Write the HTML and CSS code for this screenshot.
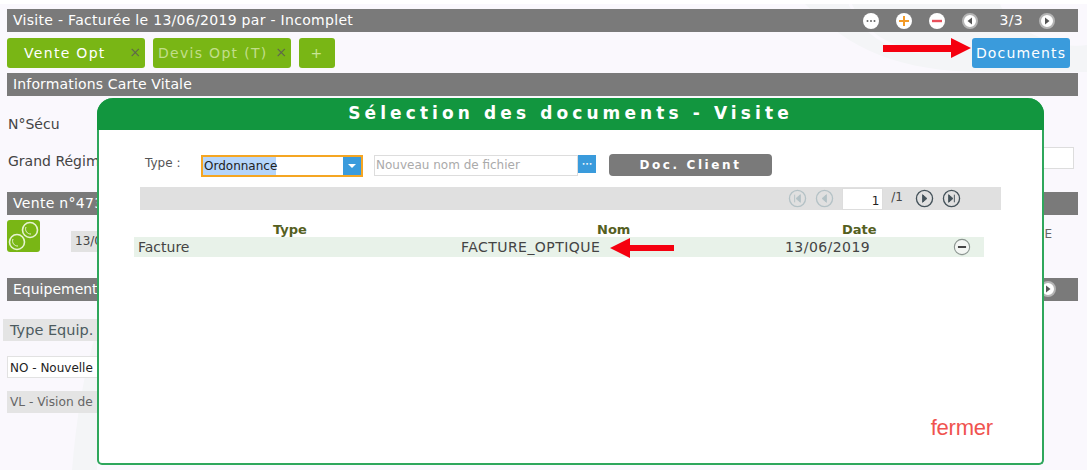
FILE: index.html
```html
<!DOCTYPE html>
<html lang="fr">
<head>
<meta charset="utf-8">
<title>Sélection des documents</title>
<link rel="stylesheet" href="styles.css">
</head>
<body>
<svg class="swoosh" width="1089" height="470" viewBox="0 0 1089 470" aria-hidden="true">
  <path d="M805 4 C850 50 900 72 985 72 L1087 72 L1087 45 C1060 50 1010 30 1000 4 Z" fill="#e6f2e8"/>
  <path d="M850 4 C862 30 885 48 920 52" fill="none" stroke="#ffffff" stroke-width="3"/>
  <path d="M72 470 C76 420 84 370 97 330 L97 470 Z" fill="#e6f2e8"/>
</svg>
<div class="page">
  <div class="bar bar-top">
    <span>Visite - Facturée le 13/06/2019 par - Incomplet</span>
    <div class="bar-tools">
      <svg class="ti" viewBox="0 0 18 18"><circle cx="9" cy="9" r="8" fill="#fff"/><circle cx="5.5" cy="9" r="1" fill="#666"/><circle cx="9" cy="9" r="1" fill="#666"/><circle cx="12.5" cy="9" r="1" fill="#666"/></svg>
      <svg class="ti" viewBox="0 0 18 18"><circle cx="9" cy="9" r="8" fill="#fff"/><path d="M9 4v10M4 9h10" stroke="#f39a26" stroke-width="2"/></svg>
      <svg class="ti" viewBox="0 0 18 18"><circle cx="9" cy="9" r="8" fill="#fff"/><path d="M4 9h10" stroke="#e8505b" stroke-width="2.4"/></svg>
      <svg class="ti" viewBox="0 0 18 18"><circle cx="9" cy="9" r="7" fill="#fff" stroke="#b5b5b5" stroke-width="2"/><path d="M11 5.500v7L6.500 9z" fill="#555"/></svg>
      <span class="count">3/3</span>
      <svg class="ti" viewBox="0 0 18 18"><circle cx="9" cy="9" r="7" fill="#fff" stroke="#b5b5b5" stroke-width="2"/><path d="M7 5.500v7l4.500-3.500z" fill="#555"/></svg>
    </div>
  </div>
  <div class="tabs">
    <div class="tab tab-active">Vente Opt<span class="x">×</span></div>
    <div class="tab tab-muted">Devis Opt (T)<span class="x">×</span></div>
    <div class="tab tab-add">+</div>
    <div class="tab-doc">Documents</div>
  </div>
  <div class="bar bar-info">Informations Carte Vitale</div>
  <div class="field f-secu">N°Sécu</div>
  <div class="field-row">
    <span class="field">Grand Régime</span>
    <span class="right-input"></span>
  </div>
  <div class="bar bar-vente">Vente n°473</div>
  <div class="vente-row">
    <div class="glasses">
      <svg width="33" height="32" viewBox="0 0 33 32"><g fill="none" stroke="#e6f3d2"><circle cx="10" cy="22" r="7.500" stroke-width="1.600"/><circle cx="23" cy="10" r="7.500" stroke-width="1.600"/><path d="M6 19a5 5 0 0 0 5 7M19 7a5 5 0 0 0 5 7" stroke-width="1"/></g></svg>
    </div>
    <div class="date-box">13/06/2019</div>
    <span class="letter-e">E</span>
  </div>
  <div class="bar bar-equip">Equipement
    <svg class="ti equip-next" viewBox="0 0 18 18"><circle cx="9" cy="9" r="7" fill="#fff" stroke="#b5b5b5" stroke-width="2"/><path d="M7 5.500v7l4.500-3.500z" fill="#555"/></svg>
  </div>
  <div class="equip-head">Type Equip.</div>
  <div class="equip-sel">NO - Nouvelle</div>
  <div class="equip-vl">VL - Vision de</div>
</div>

<div class="modal">
  <div class="modal-title">Sélection des documents - Visite</div>
  <div class="modal-body">
    <div class="form-row">
      <span class="type-label">Type :</span>
      <div class="select">
        <span class="select-text">Ordonnance</span>
        <span class="select-btn"><svg width="10" height="6" viewBox="0 0 10 6"><path d="M1 1h8L5 5z" fill="#fff"/></svg></span>
      </div>
      <div class="filename">Nouveau nom de fichier</div>
      <div class="dots">•••</div>
      <div class="doc-client">Doc. Client</div>
    </div>
    <div class="pager">
      <svg class="pi dim" viewBox="0 0 20 20"><circle cx="10" cy="10" r="8.500"/><path d="M7 6v8M13 6v8L8.500 10z"/></svg>
      <svg class="pi dim" viewBox="0 0 20 20"><circle cx="10" cy="10" r="8.500"/><path d="M12 6v8L7.500 10z"/></svg>
      <div class="page-num">1</div>
      <span class="page-total">/1</span>
      <svg class="pi" viewBox="0 0 20 20"><circle cx="10" cy="10" r="8.500"/><path d="M8 6v8l4.500-4z"/></svg>
      <svg class="pi" viewBox="0 0 20 20"><circle cx="10" cy="10" r="8.500"/><path d="M13 6v8M7 6v8l4.500-4z"/></svg>
    </div>
    <div class="thead">
      <span class="col-type">Type</span>
      <span class="col-nom">Nom</span>
      <span class="col-date">Date</span>
    </div>
    <div class="trow">
      <span class="cell-type">Facture</span>
      <span class="cell-nom">FACTURE_OPTIQUE</span>
      <span class="cell-date">13/06/2019</span>
      <svg class="minus" viewBox="0 0 20 20"><circle cx="10" cy="10" r="8.500" fill="#f3f6f3" stroke="#8b9590" stroke-width="1.200"/><path d="M5.500 10h9" stroke="#333" stroke-width="2"/></svg>
    </div>
    <div class="close">fermer</div>
  </div>
</div>

<svg class="arrow arrow-doc" width="88" height="20" viewBox="0 0 88 20" aria-hidden="true"><path d="M0 7h68V0l20 10-20 10v-6H0z" fill="#f5000f"/></svg>
<svg class="arrow arrow-nom" width="64" height="20" viewBox="0 0 64 20" aria-hidden="true"><path d="M64 7H20V0L0 10l20 10v-7h44z" fill="#f5000f"/></svg>
</body>
</html>
```
FILE: styles.css
```css
html, body {
  margin: 0;
  padding: 0;
}
body {
  width: 1089px;
  height: 470px;
  position: relative;
  overflow: hidden;
  background: #ffffff;
  font-family: "DejaVu Sans", Verdana, sans-serif;
  font-size: 12.500px;
  color: #444;
}
.swoosh {
  position: absolute;
  left: 0;
  top: 0;
}
.page {
  position: relative;
  margin: 4px 2px 0 0;
  height: 466px;
  padding: 5px 9px 0 7px;
  box-sizing: border-box;
  background: rgba(248, 246, 252, 0.75);
}
.bar {
  background: #7a7a7a;
  color: #fff;
  height: 23px;
  line-height: 23px;
  padding-left: 6px;
  font-size: 14px;
  letter-spacing: 0.3px;
  box-sizing: border-box;
}
.bar-top {
  display: flex;
  justify-content: space-between;
  align-items: center;
}
.bar-tools {
  display: flex;
  align-items: center;
  gap: 15px;
  padding-right: 22px;
}
.ti {
  width: 18px;
  height: 18px;
  display: block;
}
.count {
  margin: 0 0 0 6px;
  font-size: 14px;
}
.tabs {
  display: flex;
  gap: 8px;
  margin-top: 6px;
  height: 30px;
}
.tab {
  background: #79b615;
  border-radius: 3px;
  color: #fff;
  height: 30px;
  line-height: 30px;
  width: 138px;
  box-sizing: border-box;
  padding-left: 17px;
  font-size: 14px;
  letter-spacing: 1.300px;
  position: relative;
}
.tab-muted {
  color: #c2de8a;
  padding-left: 5px;
}
.tab-add {
  width: 36px;
  padding: 0;
  text-align: center;
  color: #c9e596;
}
.x {
  position: absolute;
  right: 4px;
  top: -1px;
  color: #5f6b4a;
  font-size: 14px;
  letter-spacing: 0;
}
.tab-doc {
  margin-left: auto;
  margin-right: 8px;
  width: 98px;
  height: 30px;
  line-height: 30px;
  background: #3a9bdc;
  border-radius: 3px;
  color: #fff;
  text-align: center;
  font-size: 14px;
  letter-spacing: 1.150px;
}
.bar-info {
  margin-top: 5px;
  letter-spacing: 0.150px;
}
.field {
  color: #444;
  font-size: 14px;
}
.f-secu {
  margin: 18px 0 0 1px;
  line-height: 20px;
}
.field-row {
  display: flex;
  justify-content: space-between;
  margin: 17px 0 0 1px;
  height: 22px;
  line-height: 20px;
}
.right-input {
  width: 40px;
  height: 22px;
  background: #fff;
  border: 1px solid #ddd;
  margin: -4px 4px 0 0;
  box-sizing: border-box;
}
.bar-vente {
  margin-top: 19px;
}
.vente-row {
  display: flex;
  align-items: flex-end;
  margin-top: 5px;
  height: 32px;
}
.glasses {
  width: 33px;
  height: 32px;
  background: #79b615;
  border-radius: 3px;
}
.date-box {
  margin-left: 31px;
  height: 21px;
  line-height: 21px;
  width: 60px;
  padding-left: 4px;
  background: #e2e2e2;
  font-size: 12px;
  white-space: nowrap;
  overflow: hidden;
}
.letter-e {
  margin-left: auto;
  margin-right: 26px;
  margin-bottom: 11px;
  font-size: 12px;
  color: #666;
}
.bar-equip {
  margin-top: 26px;
  position: relative;
  letter-spacing: 0;
}
.equip-next {
  position: absolute;
  right: 21px;
  top: 2px;
}
.equip-head {
  margin: 18px 0 0 -4px;
  width: 94px;
  height: 22px;
  line-height: 22px;
  background: #e4e4e4;
  padding-left: 7px;
  box-sizing: border-box;
  color: #4c5b60;
  font-size: 14.500px;
}
.equip-sel {
  margin-top: 15px;
  width: 90px;
  height: 22px;
  line-height: 22px;
  background: #fff;
  border: 1px solid #e2e2e2;
  border-width: 1px 0 1px 1px;
  box-sizing: border-box;
  padding-left: 2px;
  color: #222;
  font-size: 12px;
  white-space: nowrap;
  overflow: hidden;
}
.equip-vl {
  margin-top: 13px;
  width: 90px;
  height: 22px;
  line-height: 22px;
  background: #e4e4e4;
  padding-left: 3px;
  box-sizing: border-box;
  color: #666;
  font-size: 12.200px;
  white-space: nowrap;
  overflow: hidden;
}
.modal {
  position: absolute;
  left: 97px;
  top: 98px;
  width: 947px;
  height: 367px;
  box-sizing: border-box;
  background: #fff;
  border: 2px solid #2fa75c;
  border-top: 0;
  border-radius: 16px 16px 5px 5px;
  display: flex;
  flex-direction: column;
}
.modal-title {
  margin: 0 -2px;
  height: 32px;
  line-height: 30px;
  background: #12963f;
  border-radius: 16px 16px 0 0;
  color: #fff;
  text-align: center;
  font-weight: bold;
  font-size: 17px;
  letter-spacing: 4.100px;
}
.modal-body {
  flex: 1;
  display: flex;
  flex-direction: column;
  position: relative;
}
.form-row {
  display: flex;
  align-items: center;
  margin-top: 24px;
  height: 24px;
  padding-left: 46px;
}
.type-label {
  font-size: 12px;
  width: 56px;
  color: #555;
  margin-top: -6px;
}
.select {
  width: 162px;
  height: 22px;
  border: 2px solid #f5a623;
  box-sizing: border-box;
  display: flex;
  background: #fff;
  justify-content: space-between;
}
.select-text {
  background: #b5d5fb;
  color: #222;
  font-size: 12px;
  line-height: 18px;
  padding-left: 1px;
  width: 72px;
}
.select-btn {
  width: 18px;
  background: #3a9bdc;
  display: flex;
  align-items: center;
  justify-content: center;
}
.filename {
  margin-left: 11px;
  width: 204px;
  height: 21px;
  line-height: 19px;
  border: 1px solid #ddd;
  box-sizing: border-box;
  padding-left: 1px;
  color: #aaa;
  font-size: 12px;
  margin-top: -2px;
}
.dots {
  width: 18px;
  height: 18px;
  line-height: 18px;
  background: #3a9bdc;
  color: #fff;
  font-size: 6px;
  text-align: center;
  margin-top: -4px;
}
.doc-client {
  margin-left: 13px;
  width: 163px;
  height: 22px;
  line-height: 22px;
  background: #7a7a7a;
  border-radius: 4px;
  color: #fff;
  text-align: center;
  font-weight: bold;
  font-size: 12px;
  letter-spacing: 2.600px;
  margin-top: -2px;
}
.pager {
  margin: 9px 0 0 41px;
  width: 861px;
  height: 23px;
  background: #e0e0e0;
  display: flex;
  align-items: center;
  justify-content: flex-end;
  padding-right: 40px;
  box-sizing: border-box;
  gap: 8px;
}
.pi {
  width: 19px;
  height: 19px;
  fill: #44525a;
  flex: none;
}
.pi circle {
  fill: none;
  stroke: #44525a;
  stroke-width: 1.400;
}
.pi path {
  stroke: #44525a;
  stroke-width: 1;
}
.pi.dim {
  fill: #b4c2c6;
}
.pi.dim circle, .pi.dim path {
  stroke: #b4c2c6;
}
.page-num {
  width: 41px;
  height: 22px;
  line-height: 24px;
  background: #fff;
  border: 1px solid #ddd;
  box-sizing: border-box;
  text-align: right;
  padding-right: 3px;
  font-size: 12px;
  color: #222;
}
.page-total {
  font-size: 12px;
  margin: -3px 4px 0 0;
  color: #444;
}
.thead {
  display: flex;
  margin: 12px 0 0 35px;
  width: 850px;
  height: 15px;
  line-height: 15px;
  font-weight: bold;
  color: #55601f;
  font-size: 13px;
  position: relative;
}
.col-type {
  margin-left: 139px;
  width: 324px;
}
.col-nom {
  width: 245px;
}
.trow {
  margin-left: 35px;
  width: 850px;
  height: 20px;
  line-height: 19px;
  background: #e8f2e9;
  display: flex;
  align-items: center;
  font-size: 14px;
  letter-spacing: 0.450px;
  color: #444;
  position: relative;
}
.cell-type {
  margin-left: 4px;
  width: 323px;
  letter-spacing: 0;
}
.cell-nom {
  width: 324px;
}
.cell-date {
  width: 168px;
}
.minus {
  width: 18px;
  height: 18px;
}
.close {
  margin: auto 49px 24px auto;
  color: #f0534f;
  font-family: "Liberation Sans", Arial, sans-serif;
  font-size: 22px;
  letter-spacing: -0.200px;
  line-height: 22px;
}
.arrow {
  position: absolute;
}
.arrow-doc {
  left: 883px;
  top: 38px;
}
.arrow-nom {
  left: 610px;
  top: 238px;
}
```
